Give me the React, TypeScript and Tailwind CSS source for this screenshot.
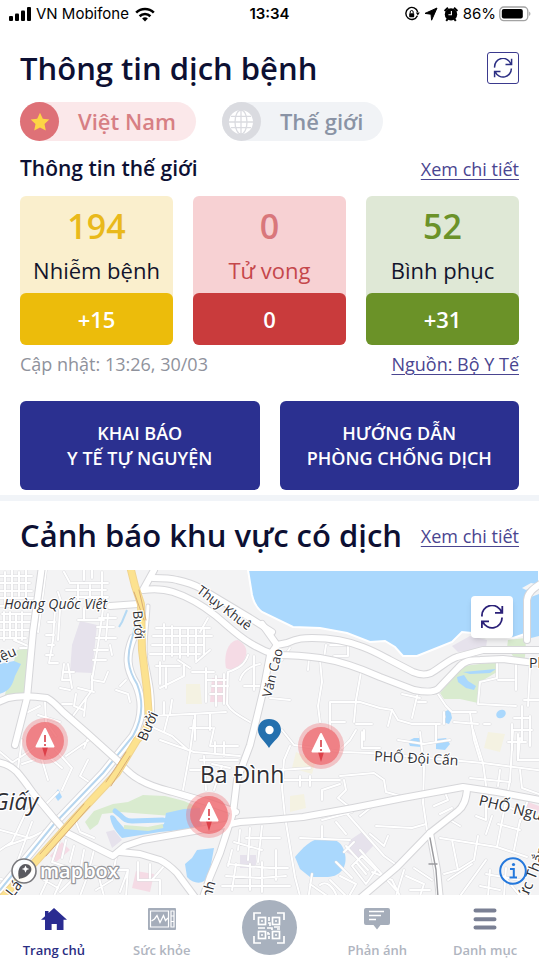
import type { ReactNode } from "react";

const stats = [
  {
    label: "Nhiễm bệnh",
    total: "194",
    change: "+15",
    box: "bg-[#faefcd]",
    number: "text-[#e9b91b]",
    text: "text-[#12142b]",
    bar: "bg-[#ecbc0b]",
  },
  {
    label: "Tử vong",
    total: "0",
    change: "0",
    box: "bg-[#f7d1d3]",
    number: "text-[#d9777b]",
    text: "text-[#c5474b]",
    bar: "bg-[#c93b3c]",
  },
  {
    label: "Bình phục",
    total: "52",
    change: "+31",
    box: "bg-[#dfe8d6]",
    number: "text-[#6b9229]",
    text: "text-[#12142b]",
    bar: "bg-[#6b9228]",
  },
];

const actions = [
  ["KHAI BÁO", "Y TẾ TỰ NGUYỆN"],
  ["HƯỚNG DẪN", "PHÒNG CHỐNG DỊCH"],
];

const majorRoads = [
  "M153 578C162 578 170 578 177 580C186 582 193 584 200 588L250 618L272 632",
  "M154 570L143 590C158 588 167 590 173 592C192 598 206 608 216 616C228 626 238 636 250 643C258 648 266 652 276 655C290 655 306 656 320 658C340 661 362 669 380 677L414 690C424 692 434 692 438 689L458 668C464 661 470 660 480 660L503 659L527 662L545 663",
  "M262 624L277 645L287 643C298 638 304 638 312 638C330 638 348 641 363 647C376 652 384 657 390 660L413 672C420 675 426 675 431 673C440 668 448 660 457 657L483 650L545 650",
  "M277 645L270 655L263 692L255 725L250 745L237 780L233 813L220 853L210 877L202 900",
  "M-4 703L8 698C20 695 34 696 47 698C54 702 58 707 63 712L87 733L117 760C124 768 132 776 140 780C152 787 162 789 173 792L207 802L236 812",
  "M-4 762C6 763 12 767 17 772C24 780 28 786 33 793L53 817L67 833L87 843L113 856L125 846L143 840L200 830L240 822L270 820L303 817L353 808L403 798L463 787L497 792L545 801",
  "M120 852L140 854L160 860C168 864 173 869 177 873L197 900",
  "M467 790C466 800 464 806 458 811L430 833L397 867L358 900",
  "M430 833L437 870L440 900",
  "M527 640L527 600C528 592 534 588 542 583",
  "M42 566L33 632L27 698L15 745",
  "M110 606L138 604",
];

const minorRoads = [
  "M-2 606H20M-2 576H32M-2 583H30M-2 591H32M-2 598H34M5 572V604M12 570V602M19 572V596M26 570V600M46 570L38 632",
  "M2 614H34M0 622H33M-2 630H30M4 612V640M10 612V638M16 614V640M22 612V640M-2 638H26M20 648H33",
  "M64 572L70 583H108M66 590H106M74 597H108M84 570V580M92 570V578M102 572V606M58 592L62 604M78 585V604M90 585V597",
  "M55 610L53 640L49 663M48 622H55M60 610L58 640M46 635H54M48 645H54M46 655H53M49 663H58M84 608V620M78 620H104M104 602L98 645L92 680",
  "M108 614L106 640M99 618H116M97 627H114M96 638H116M94 650H108M93 660H106M110 645L112 655M92 680L104 682L108 672",
  "M64 664L62 680H70M64 672H74M60 688L70 690M68 664L72 688M78 688L94 692M76 694L74 706L84 710M86 698L84 716M62 704L72 704M92 676V690L70 720",
  "M116 690L128 694L130 702M120 686L126 680M40 706L22 715M38 715L60 722M45 702L46 722L56 736M14 640L33 648",
  "M156 628H210M153 636H212M152 645H204M150 654H200M164 624V660M172 626V656M180 628V658M188 628V656M196 628V660M204 630V654M208 618L200 632M210 650L196 662",
  "M156 666H180M160 662V684M166 668V688M178 660L190 668M184 664V676L160 688M192 672L214 672M206 668V702M206 680H226M212 686H228M210 694H224M216 676V706M224 674V704",
  "M248 655C245 664 240 668 228 672L227 704C230 710 236 714 250 722M254 656V690M240 680C242 672 250 666 260 664M244 686H262M150 716L190 714L226 712M195 714V740M190 728H212M210 714V730M164 702V714M172 700L170 714",
  "M168 716L164 732M150 726L172 736L188 750M160 740L194 752M194 720L190 752L183 790M194 752L240 756M214 728L210 746H238M200 760H238M204 756L206 790M212 764L230 768M215 742V754M224 742V756M222 766L214 790M190 770H205",
  "M88 760L80 776L92 784L104 772M92 784L78 796M66 756L92 738M48 756L62 768M10 764L52 736M0 752L12 762M56 750L72 768L62 790M48 780L42 760M88 738L84 748M22 740L18 768M34 760L22 764",
  "M76 822L80 832L94 838M82 808L66 826M40 800L26 812M58 792L46 804M0 830L30 838L46 830M6 846L34 836M32 822L18 860M26 812L12 842L0 850M60 838L52 862L70 868M66 840L62 858M74 846L70 862M84 850L80 872L60 892M94 850L90 866L110 870",
  "M104 870H128L126 896M116 858L112 880L96 890M138 862V880H160V896M150 864V878M128 870L120 892M164 866L152 880M52 870L40 896M64 874L54 896M76 870L86 880L80 896M98 874L104 896M44 880L58 888",
  "M228 864L270 868L288 868M234 842L262 850M240 830L238 850M250 828L248 860M262 826L258 862M226 876L260 878L286 876M236 864L232 890M250 864V890M262 862V892M276 850V880M222 886H290M232 850L228 866M246 838H280",
  "M290 648L282 660M326 645L324 658M330 645H348V656H334M309 658L308 670M320 660L322 682L318 706L320 722M361 672L356 700L354 722M270 698L290 700M330 730V702H360L380 708L392 710L398 720L412 724H440",
  "M418 692L412 718M402 694L420 698M418 702H426M438 694L446 706L452 712H476M470 712L474 740L480 760M330 722H345M356 724H372M364 730V740M392 710L388 726M436 724V742M444 712V724M454 722L478 724M484 724H490",
  "M497 662V678L480 682L478 704L516 706M516 660V690M530 668L528 706M498 680H514M524 700H540M522 706V742M514 718H530M512 730H532M512 724V750M530 716V746M518 734V760M508 742H526",
  "M282 730L294 745L343 752L370 753L450 760L483 763L545 771M290 746L284 760L282 788L285 817L290 847L295 877L301 900M342 748L350 740L356 730M362 732V748H380",
  "M284 780L340 780M280 770L310 768M340 776L374 773L384 780L386 792L400 796M344 780L346 790L338 798L348 806M322 800V790L340 784M300 776V786M310 776V786M420 732L424 767L423 803L427 830M398 740L424 744M424 744L450 740",
  "M376 826L412 828L426 824M370 808L360 816M342 808L384 856L398 866M322 826V838M322 820L352 812M300 838L350 840M336 822L346 834M346 846L368 870M354 842L344 852M372 872L392 880L402 900M370 834L384 846L388 836M360 850L396 890",
  "M352 866L362 856L376 870L366 884ZM340 876L356 884L348 898M356 862L366 874M330 880L346 896M310 884L330 898M336 862L352 878M-2 878L16 884M312 874L308 900M320 885C326 880 334 886 338 900",
  "M406 876L424 884L420 896M404 870L396 896M414 868L432 880M410 890H430M440 838L497 847L527 857M513 730L510 780L497 847M473 730L483 763L488 800M452 840L458 870L444 874M458 870L474 860L478 836M448 880L472 864",
  "M434 806L448 800L444 790M440 814L452 808M450 820L460 826M486 804V820L476 816M484 800L500 806M492 816L486 834M506 806L520 812M498 824L520 830M486 874L520 880M480 886L500 890M490 870L488 896M506 868L504 896M520 820L514 850",
  "M504 876L520 896M460 896L486 860M520 770L522 788L539 794M500 770L498 786M470 778L510 782M520 738L518 760H540M528 800L520 822",
];

const mapLabels = [
  { text: "Hoàng Quốc Việt", x: 4, y: 609, size: 14, rotate: 0, italic: true },
  { text: "Thụy Khuê", x: 196, y: 592, size: 13, rotate: 37 },
  { text: "Bưởi", x: 133, y: 611, size: 13, rotate: 86 },
  { text: "Bưởi", x: 146, y: 742, size: 14, rotate: -66 },
  { text: "Văn Cao", x: 271, y: 698, size: 13, rotate: -76 },
  { text: "iệu", x: -1, y: 663, size: 14, rotate: -24 },
  { text: "PHỐ Đội Cấn", x: 374, y: 761, size: 14, rotate: 3 },
  { text: "PHỐ Ngu", x: 478, y: 805, size: 15, rotate: 14 },
  { text: "Ph", x: 529, y: 668, size: 14, rotate: 0 },
  { text: "ức Thắn", x: 527, y: 900, size: 15, rotate: -68 },
  { text: "Lá", x: 13, y: 898, size: 15, rotate: -52 },
  { text: "nh", x: 211, y: 899, size: 14, rotate: -74 },
  { text: "Ba Đình", x: 200, y: 783, size: 23, rotate: 0 },
  { text: "Giấy", x: -7, y: 810, size: 23, rotate: 0, italic: true },
];

const alerts = [
  { x: 45, y: 741 },
  { x: 321, y: 746 },
  { x: 209, y: 815 },
];

function RefreshIcon({ className }: { className: string }) {
  return (
    <svg viewBox="0 0 24 24" className={className} fill="none" stroke="currentColor" strokeWidth="1.8" aria-hidden="true">
      <path d="M2 11.5A10 10 0 0 1 21.5 7.5M15 7.8H22.3V1" />
      <path d="M22 12.5A10 10 0 0 1 2.8 16.8M1.9 23V16.3H9" />
    </svg>
  );
}

function StatusBar() {
  return (
    <div className="grid h-7 grid-cols-3 items-center px-2 font-['Inter',sans-serif] text-black">
      <div className="flex items-center gap-1 whitespace-nowrap text-[15px]">
        <svg viewBox="0 0 24 16" className="h-4 w-6 shrink-0" aria-hidden="true">
          <rect x="1" y="10" width="4" height="5" rx="1" />
          <rect x="7" y="7.5" width="4" height="7.5" rx="1" />
          <rect x="13" y="4.5" width="4" height="10.5" rx="1" />
          <rect x="19" y="1" width="4" height="14" rx="1" />
        </svg>
        <span>VN Mobifone</span>
        <svg viewBox="0 0 20 15" className="ml-0.5 h-[15px] w-5 shrink-0" fill="none" stroke="currentColor" strokeWidth="2.6" aria-hidden="true">
          <path d="M1.2 5.6a12.6 12.6 0 0 1 17.6 0M4.6 9.2a7.8 7.8 0 0 1 10.8 0" />
          <path d="M10 14.6l-2.9-3a4.2 4.2 0 0 1 5.8 0z" fill="currentColor" stroke="none" />
        </svg>
      </div>
      <span className="text-center text-[15px] font-semibold">13:34</span>
      <div className="flex items-center justify-end gap-[3px] text-[15px]">
        <svg viewBox="0 0 16 16" className="size-4 shrink-0" fill="none" stroke="currentColor" strokeWidth="1.4" aria-hidden="true">
          <path d="M13.4 9.8A6 6 0 1 1 13.7 6" />
          <path d="M11.8 6.4h4l-2 3z" fill="currentColor" stroke="none" />
          <rect x="5.2" y="7.2" width="5" height="4" rx=".6" fill="currentColor" stroke="none" />
          <path d="M6.2 7.4V6a1.5 1.5 0 0 1 3 0v1.4" strokeWidth="1" />
        </svg>
        <svg viewBox="0 0 16 16" className="size-4 shrink-0" aria-hidden="true">
          <path d="M14 2L8.6 14.2 8 8.2 2 7.4z" stroke="currentColor" strokeLinejoin="round" />
        </svg>
        <svg viewBox="0 0 16 16" className="mx-px size-4 shrink-0" aria-hidden="true">
          <circle cx="8" cy="8.4" r="6.2" />
          <path d="M1.6 5L5 1.8M14.4 5L11 1.8M3.2 14.8l1.6-2M12.8 14.8l-1.6-2" stroke="currentColor" strokeWidth="2" />
          <path d="M8.4 5v3.8H5.4" fill="none" stroke="white" strokeWidth="1.1" />
        </svg>
        <span>86%</span>
        <svg viewBox="0 0 32 16" className="h-4 w-8 shrink-0" aria-hidden="true">
          <rect x=".8" y="1" width="28" height="13.6" rx="4" fill="none" stroke="#a3a3a3" strokeWidth="1.3" />
          <rect x="2.8" y="3" width="21" height="9.6" rx="2" />
          <path d="M30.2 5.6a2.6 2.6 0 0 1 0 4.4z" fill="#a3a3a3" />
        </svg>
      </div>
    </div>
  );
}

function RegionTabs() {
  return (
    <div className="mt-[18px] flex gap-[26px] text-[22px] font-semibold">
      <button type="button" aria-pressed="true" className="flex h-[39px] items-center gap-[19px] rounded-full bg-[#fbe8ea] pr-5 text-[#d77f84]">
        <span className="flex size-[39px] items-center justify-center rounded-full bg-[#de7177]">
          <svg viewBox="0 0 20 20" className="size-5" fill="#fdd545" aria-hidden="true">
            <path d="M10 .8l2.8 6 6.5.8-4.8 4.5 1.3 6.5L10 15.4l-5.8 3.2 1.3-6.5L.7 7.6l6.5-.8z" />
          </svg>
        </span>
        Việt Nam
      </button>
      <button type="button" aria-pressed="false" className="flex h-[39px] items-center gap-[19px] rounded-full bg-[#f1f3f6] pr-5 text-[#8a93a5]">
        <span className="flex size-[39px] items-center justify-center rounded-full bg-[#dadbe0]">
          <svg viewBox="0 0 24 24" className="size-6" aria-hidden="true">
            <circle cx="12" cy="12" r="12" fill="white" />
            <g fill="none" stroke="#dadbe0" strokeWidth="1.3">
              <path d="M12 0v24M0 12h24M2 6.4h20M2 17.6h20" />
              <ellipse cx="12" cy="12" rx="6" ry="12" />
            </g>
          </svg>
        </span>
        Thế giới
      </button>
    </div>
  );
}

function AreaMap() {
  return (
    <svg viewBox="0 570 539 325" className="block w-full" role="img" aria-label="Bản đồ khu vực Ba Đình">
      <rect y="570" width="539" height="325" fill="#f3f3f4" />

      {/* land use */}
      <g fill="#e6e2ec">
        <path d="M80 621L97 625 92 673 70 672 72 645z" />
        <path d="M470 636L487 640 486 648 458 652 452 646z" />
        <path d="M350 840L362 832 374 845 360 860 346 852z" />
        <path d="M106 832L114 830 122 840 112 848z" />
        <path d="M240 855H256V868H240z" />
      </g>
      <g fill="#f5dbe5">
        <path d="M226 668C223 652 230 640 238 640C246 644 249 652 244 660C240 666 232 672 226 668z" />
        <path d="M212 678H226V702H210z" />
        <path d="M136 871L154 874 150 892 132 888z" />
        <path d="M528 802L539 806V814L526 810z" />
        <path d="M62 842L70 850 56 862 50 856z" />
      </g>
      <g fill="#f4f2e2">
        <path d="M186 684L200 684 202 704 186 704z" />
        <path d="M488 732L505 734 500 752 484 748z" />
        <path d="M296 752L316 760 312 774 292 768z" />
        <path d="M290 796L304 794 306 808 290 812z" />
      </g>
      <g fill="#d9ebcf">
        <path d="M17 650L30 648 26 698 4 698z" />
        <path d="M85 822L94 811 113 804 128 802 143 795 165 796 184 801 200 808 198 818 120 812 102 814 98 824 90 830z" />
        <path d="M440 693L453 678 463 666 497 662 497 672 480 682 478 703 460 699 444 699z" />
        <path d="M508 640L525 638 526 648 524 664 516 660 507 648z" />
      </g>

      {/* water */}
      <g fill="#aad8fd">
        <path
          d="M248 570L252 595C254 604 258 609 262 612L293 627 320 628 347 633 370 642 385 641 395 647 403 656H417L437 648 452 642 462 632 472 633 487 638H513L525 634V598L539 583V570z"
          stroke="#ffffff"
          strokeWidth="2"
        />
        <path d="M531 597L539 594V636L531 638z" />
        <path d="M-1 664L14 661 21 664 15 676C12 686 10 691 -1 694z" />
        <path d="M295 857C302 848 312 839 321 838C330 837 338 840 342 846C346 853 347 862 343 869C338 876 332 877 325 877H310L300 869z" />
        <path d="M214 848L197 850 192 858 185 864 187 877C192 883 200 884 204 881L209 876z" />
        <path d="M110 816C112 814 115 816 117 820L124 828 150 829 164 824 166 813 184 809 200 808 202 828 160 832 122 838C116 832 111 825 110 816z" />
        <path d="M408 741L414 738 421 738V747L410 746z" />
        <path d="M436 739L446 738 450 744 445 750 436 749z" />
        <ellipse cx="501" cy="714" rx="5" ry="4" transform="rotate(-30 501 714)" />
        <path d="M463 672L496 669 490 673 470 674z" />
        <path d="M457 677L464 675 468 681 476 686 474 690 466 688 458 682z" />
        <path d="M444 712L450 709 452 718 449 724 443 722 446 717z" />
        <path d="M58 789L62 797 58 801 54 795z" />
      </g>
      <path d="M115 811L120 815C124 819 126 821 132 821L163 820" fill="none" stroke="#aad8fd" strokeWidth="5" strokeLinecap="round" />
      <path d="M124 827L148 829 163 826" fill="none" stroke="#d9ebcf" strokeWidth="4" />
      <path d="M119 627L122 622 127 610" fill="none" stroke="#b5d9f3" strokeWidth="2" />
      <path d="M522 588L531 583 536 584 526 590z" fill="#f5f5f5" />

      {/* streets */}
      <g fill="none" strokeLinecap="round" strokeLinejoin="round">
        {minorRoads.map((d) => (
          <path key={d} d={d} stroke="#dddde0" strokeWidth="3" />
        ))}
        {minorRoads.map((d) => (
          <path key={d} d={d} stroke="#ffffff" strokeWidth="2" />
        ))}
        <path d="M133 638C126 655 126 668 136 684C144 702 142 720 133 736L103 773 55 823 0 890" stroke="#d8d8dc" strokeWidth="9" />
        <path d="M133 638C126 655 126 668 136 684C144 702 142 720 133 736L103 773 55 823 0 890" stroke="#ffffff" strokeWidth="7" />
        <path d="M134 612C136 625 134 632 131 642C127 656 127 668 137 684C144 702 142 720 133 736L103 773 55 823 0 890" stroke="#b6d5ee" strokeWidth="2" />
        <path d="M148 606C147 630 143 642 146 662C150 680 154 698 152 716" stroke="#d8d8dc" strokeWidth="5" />
        <path d="M148 606C147 630 143 642 146 662C150 680 154 698 152 716" stroke="#ffffff" strokeWidth="3" />
        {majorRoads.map((d) => (
          <path key={d} d={d} stroke="#d6d6d9" strokeWidth="8" />
        ))}
        {majorRoads.map((d) => (
          <path key={d} d={d} stroke="#ffffff" strokeWidth="6" />
        ))}
        <path d="M130 566L135 586 141 604 142 650 147 690 149 718C149 728 143 734 137 740L117 773 73 820 37 860 0 900" stroke="#f0d490" strokeWidth="8" />
        <path d="M130 566L135 586 141 604 142 650 147 690 149 718C149 728 143 734 137 740L117 773 73 820 37 860 0 900" stroke="#fce28f" strokeWidth="6" />
        <path d="M134 592L144 620M126 752L106 782M84 804L40 854" stroke="#d9ad77" strokeWidth="1" />
        <path d="M139 590L146 620M130 756L111 786M90 806L46 856" stroke="#d9ad77" strokeWidth="1" />
        <path d="M430 838L436 870 438 897M429 864H437" stroke="#9b9b9f" strokeWidth="1.4" />
      </g>

      <g fill="#2f2f34" stroke="#ffffff" strokeWidth="2.5" strokeLinejoin="round" style={{ paintOrder: "stroke" }}>
        {mapLabels.map((label) => (
          <text
            key={`${label.text}-${label.y}`}
            transform={`translate(${label.x} ${label.y}) rotate(${label.rotate})`}
            fontSize={label.size}
            fontStyle={label.italic ? "italic" : "normal"}
          >
            {label.text}
          </text>
        ))}
      </g>

      {/* current position */}
      <path d="M269 719C262.500 719 258 723.500 258 730C258 737 265 741 269 748C273 741 281 737 281 730C281 723.500 276 719 269 719z" fill="#2470ae" />
      <circle cx="269.500" cy="730" r="4.200" fill="#ffffff" />

      {alerts.map(({ x, y }) => (
        <g key={x} transform={`translate(${x} ${y})`}>
          <circle r="23" fill="#ee6b70" fillOpacity=".35" />
          <circle r="19" fill="#ee6b70" fillOpacity=".75" />
          <path d="M-3 6H3L0 16z" fill="#dd3f48" />
          <path d="M0-12L8.500 5.500H-8.500z" fill="#ffffff" stroke="#ffffff" strokeWidth="2" strokeLinejoin="round" />
          <path d="M0-6V1M0 3V5" stroke="#d83d45" strokeWidth="1.600" />
        </g>
      ))}

      {/* attribution */}
      <circle cx="24" cy="871" r="12" fill="#ffffff" fillOpacity=".9" stroke="#77777b" strokeWidth="1.600" />
      <path d="M19 879C17 871 19 865 25 864C31 864 33 869 30 873C27 877 23 878 19 879z" fill="#5a5a5f" />
      <path d="M25.500 865.500L26.700 868 29.300 869 26.700 870 25.500 872.700 24.300 870 21.800 869 24.300 868z" fill="#ffffff" />
      <text x="40" y="878" fontSize="20" fontWeight="600" fill="#ffffff" stroke="#98989c" strokeWidth="2.500" strokeLinejoin="round" style={{ paintOrder: "stroke" }}>
        mapbox
      </text>
    </svg>
  );
}

function NavItem({ label, active, children }: { label: string; active?: boolean; children: ReactNode }) {
  return (
    <a
      href="#"
      aria-current={active ? "page" : undefined}
      className={`flex flex-col items-center justify-between pt-3 text-[13px] font-semibold leading-[18px] ${
        active ? "text-[#2b2e83]" : "text-[#b0b5c0]"
      }`}
    >
      {children}
      <span className="pb-px">{label}</span>
    </a>
  );
}

function BottomNav() {
  return (
    <nav className="grid h-[65px] grid-cols-5 bg-white" aria-label="Điều hướng chính">
      <NavItem label="Trang chủ" active>
        <svg viewBox="0 0 26 24" className="h-6 w-[26px]" fill="#2a2c91" aria-hidden="true">
          <path d="M13 1L26 12.800H22.500V23H15.800V17H10.600V23H4V12.800H0L4 9.200V4H7.500V6z" />
        </svg>
      </NavItem>
      <NavItem label="Sức khỏe">
        <svg viewBox="0 0 28 22" className="mt-px h-[22px] w-7" fill="none" aria-hidden="true">
          <rect width="28" height="22" rx="1" fill="#a5adba" />
          <path d="M2.500 3H20.500V19H2.500zM23 3H26V19H23zM23 8H26M23 13.500H26" stroke="white" strokeWidth="1.200" />
          <path d="M3.500 13L6.500 11 9 7.500 12 14.500 15.500 7.500 17.500 12.500 20 10" stroke="white" strokeWidth="1.300" />
        </svg>
      </NavItem>
      <a href="#" aria-label="Quét mã QR" className="flex items-center justify-center">
        <span className="flex size-[55px] items-center justify-center rounded-full bg-[#a8b1be]">
          <svg viewBox="0 0 32 32" className="size-8" fill="none" stroke="white" strokeWidth="1.700" aria-hidden="true">
            <path d="M1 8V1H8M24 1H31V8M31 24V31H24M8 31H1V24" />
            <rect x="5.500" y="5.500" width="7" height="7" />
            <rect x="19.500" y="5.500" width="7" height="7" />
            <rect x="5.500" y="19.500" width="7" height="7" />
            <rect x="19.500" y="19.500" width="7" height="7" />
            <path d="M8 9H10M22 9H24M8 23H10M22 23H24M16 5V9M15 11H17V14M5 16H12M14 16H19V18M21 15H27M24 17H27M15 20V22H17M16 24V27" />
          </svg>
        </span>
      </a>
      <NavItem label="Phản ánh">
        <svg viewBox="0 0 26 22" className="mt-px h-[22px] w-[26px]" aria-hidden="true">
          <path d="M2 0H24Q26 0 26 2V15Q26 17 24 17H16.500L13 21.500 9.500 17H2Q0 17 0 15V2Q0 0 2 0z" fill="#a5adba" />
          <path d="M5 3.500H20M5 7.500H17M5 11.500H12" stroke="white" strokeWidth="1.300" />
        </svg>
      </NavItem>
      <NavItem label="Danh mục">
        <svg viewBox="0 0 24 22" className="mt-px h-[22px] w-6" stroke="#7a8094" strokeWidth="4" strokeLinecap="round" aria-hidden="true">
          <path d="M2.500 2.500H21.500M2.500 11.200H21.500M2.500 19.500H21.500" />
        </svg>
      </NavItem>
    </nav>
  );
}

export default function App() {
  return (
    <div className="min-h-screen bg-white font-['Open_Sans',sans-serif] text-[#0d1033]">
      <StatusBar />

      <section className="px-5 pt-6">
        <div className="flex h-8 items-center justify-between">
          <h1 className="text-[31px] font-semibold">Thông tin dịch bệnh</h1>
          <button type="button" aria-label="Tải lại số liệu" className="flex size-8 items-center justify-center rounded-[3px] border border-[#3b3a8e] text-[#2b2e83]">
            <RefreshIcon className="size-5" />
          </button>
        </div>

        <RegionTabs />

        <div className="mt-[14px] flex h-7 items-center justify-between">
          <h2 className="text-[21px] font-semibold">Thông tin thế giới</h2>
          <a href="#" className="text-lg text-[#4a4590] underline decoration-1 underline-offset-3">
            Xem chi tiết
          </a>
        </div>

        <div className="mt-[13px] grid grid-cols-3 gap-5 text-center">
          {stats.map((stat) => (
            <div key={stat.label} className={`rounded-md ${stat.box}`}>
              <div className={`pt-[7px] text-[34px] font-semibold leading-[46px] ${stat.number}`}>{stat.total}</div>
              <div className={`pb-0.5 text-[22px] leading-[42px] ${stat.text}`}>{stat.label}</div>
              <div className={`rounded-md text-[22px] font-semibold leading-[52px] text-white ${stat.bar}`}>{stat.change}</div>
            </div>
          ))}
        </div>

        <div className="mt-[5px] flex h-7 items-center justify-between text-lg">
          <span className="text-[#8f929c]">Cập nhật: 13:26, 30/03</span>
          <a href="#" className="text-[#4a4590] underline decoration-1 underline-offset-3">
            Nguồn: Bộ Y Tế
          </a>
        </div>

        <div className="mt-[23px] grid grid-cols-2 gap-5">
          {actions.map(([first, second]) => (
            <button key={first} type="button" className="h-[89px] rounded-md bg-[#2b3090] text-lg font-semibold leading-[25px] text-white">
              {first}
              <br />
              {second}
            </button>
          ))}
        </div>
      </section>

      <section className="mt-[5px] border-t-[6px] border-[#f1f4f8]">
        <div className="flex h-[69px] items-center justify-between whitespace-nowrap px-5">
          <h2 className="text-[31px] font-semibold">Cảnh báo khu vực có dịch</h2>
          <a href="#" className="text-lg text-[#4a4590] underline decoration-1 underline-offset-3">
            Xem chi tiết
          </a>
        </div>
        <div className="relative">
          <AreaMap />
          <button type="button" aria-label="Tải lại bản đồ" className="absolute right-[26px] top-[26px] flex size-[42px] items-center justify-center rounded bg-white text-[#2b2178] shadow-md">
            <RefreshIcon className="size-6" />
          </button>
          <button type="button" aria-label="Thông tin bản đồ" className="absolute bottom-2.5 right-3 text-[#2478dc]">
            <svg viewBox="0 0 28 28" className="size-7" fill="none" stroke="currentColor" strokeWidth="2" aria-hidden="true">
              <circle cx="14" cy="14" r="12.800" />
              <path d="M11 12H14.800V20.500M10.500 20.500H18" />
              <circle cx="14.500" cy="7.500" r="1.600" fill="currentColor" stroke="none" />
            </svg>
          </button>
        </div>
      </section>

      <BottomNav />
    </div>
  );
}
